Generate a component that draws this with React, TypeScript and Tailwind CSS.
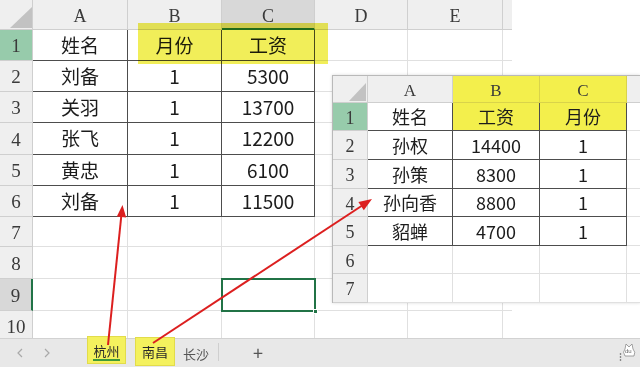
import React from "react";

const CJK = "font-['Noto_Sans_CJK_SC',sans-serif]";
const SERIF = "font-['Liberation_Serif',serif]";

const leftData: string[][] = [
  ["姓名", "月份", "工资"],
  ["刘备", "1", "5300"],
  ["关羽", "1", "13700"],
  ["张飞", "1", "12200"],
  ["黄忠", "1", "6100"],
  ["刘备", "1", "11500"],
];

const rightData: string[][] = [
  ["姓名", "工资", "月份"],
  ["孙权", "14400", "1"],
  ["孙策", "8300", "1"],
  ["孙向香", "8800", "1"],
  ["貂蝉", "4700", "1"],
];

function Corner({ tri }: { tri: string }) {
  return (
    <div className="bg-[#efefef] border-r border-b border-[#cfcfcf] relative">
      <svg className="absolute inset-0 w-full h-full">
        <polygon points={tri} fill="#c2c2c2" />
      </svg>
    </div>
  );
}

function LeftSheet() {
  const letters = ["A", "B", "C", "D", "E", ""];
  const rows = Array.from({ length: 10 }, (_, i) => i + 1);
  return (
    <div className="w-[512px] h-[338px] overflow-hidden">
      <div className="grid grid-cols-[33px_95px_94px_93px_93px_95px_9px] grid-rows-[30px_31px_31px_31px_32px_31px_31px_30px_32px_32px_31px]">
        <Corner tri="10,28 32,28 32,7" />
        {letters.map((l, i) => (
          <div
            key={l + i}
            className={`${i === 2 ? "bg-[#d8d8d8] border-b-2 border-b-[#217346]" : "bg-[#efefef] border-b border-b-[#cfcfcf]"} ${i === 5 ? "" : "border-r border-r-[#cfcfcf]"} flex items-center justify-center pt-[4px] text-[18px] text-[#3a3a3a] ${SERIF}`}
          >
            {l}
          </div>
        ))}
        {rows.map((r) => {
          const hdrBg = r === 1 ? "bg-[#97cbab]" : r === 9 ? "bg-[#d8d8d8]" : "bg-[#efefef]";
          return (
            <React.Fragment key={r}>
              <div
                className={`${hdrBg} border-b border-[#cfcfcf] ${r === 9 ? "border-r-2 border-r-[#217346]" : "border-r border-r-[#cfcfcf]"} flex items-center justify-center pt-[3px] text-[19px] text-[#3a3a3a] ${SERIF}`}
              >
                {r}
              </div>
              {[0, 1, 2, 3, 4, 5].map((c) => {
                const inTable = r <= 6 && c <= 2;
                const txt = inTable ? leftData[r - 1][c] : "";
                return (
                  <div
                    key={c}
                    className={`${inTable ? "border-[#4d4d4d]" : "border-[#e0e0e0]"} ${r <= 6 && c === 3 ? "border-b border-b-[#e0e0e0]" : "border-b"} ${c === 5 ? "" : "border-r"} flex items-center justify-center text-[19px] text-[#1c1c1c] ${CJK}`}
                  >
                    {txt}
                  </div>
                );
              })}
            </React.Fragment>
          );
        })}
      </div>
    </div>
  );
}

function RightSheet() {
  const heights = [1, 2, 3, 4, 5, 6, 7];
  return (
    <div className="absolute left-[332px] top-[75px] w-[308px] bg-white border-t border-l border-[#b9b9b9] shadow-[0_0_3px_rgba(0,0,0,0.15)]">
      <div className="grid grid-cols-[35px_85px_87px_87px_13px] grid-rows-[27px_28px_29px_29px_28px_29px_28px_29px]">
        <Corner tri="16,25 33,25 33,7" />
        <div className={`bg-[#efefef] border-r border-b border-[#cfcfcf] flex items-center justify-center pt-[4px] text-[17px] text-[#3a3a3a] ${SERIF}`}>A</div>
        <div className={`bg-[#f3ef4c] border-r border-b border-[#d9d34a] flex items-center justify-center pt-[4px] text-[17px] text-[#3a3a3a] ${SERIF}`}>B</div>
        <div className={`bg-[#f3ef4c] border-r border-b border-[#d9d34a] flex items-center justify-center pt-[4px] text-[17px] text-[#3a3a3a] ${SERIF}`}>C</div>
        <div className="bg-[#efefef] border-b border-[#cfcfcf]" />
        {heights.map((r) => (
          <React.Fragment key={r}>
            <div
              className={`${r === 1 ? "bg-[#97cbab]" : "bg-[#efefef]"} border-r border-b border-[#cfcfcf] flex items-center justify-center pt-[3px] text-[18px] text-[#3a3a3a] ${SERIF}`}
            >
              {r}
            </div>
            {[0, 1, 2].map((c) => {
              const inTable = r <= 5;
              const yellow = r === 1 && c >= 1;
              return (
                <div
                  key={c}
                  className={`${yellow ? "bg-[#f3ef4c]" : ""} ${inTable ? "border-[#4d4d4d]" : "border-[#e0e0e0]"} border-r border-b flex items-center justify-center text-[18px] text-[#1c1c1c] ${CJK}`}
                >
                  {inTable ? rightData[r - 1][c] : ""}
                </div>
              );
            })}
            <div className="border-b border-[#e0e0e0]" />
          </React.Fragment>
        ))}
      </div>
    </div>
  );
}

function TabBar() {
  return (
    <div className={`h-[29px] bg-[#e8e8e8] border-t border-[#d2d2d2] flex items-start text-[13px] ${CJK}`}>
      <svg className="ml-[17px] mt-[9px]" width="6" height="10" viewBox="0 0 6 10">
        <polyline points="5,1 1,5 5,9" fill="none" stroke="#a9a9a9" strokeWidth="1.2" />
      </svg>
      <svg className="ml-[21px] mt-[9px]" width="6" height="10" viewBox="0 0 6 10">
        <polyline points="1,1 5,5 1,9" fill="none" stroke="#a9a9a9" strokeWidth="1.2" />
      </svg>
      <div className="ml-[37px] w-[39px] h-[28px] mt-[-3px] bg-[#f4f15e] border border-[#e2dc4a] flex flex-col items-center justify-center">
        <span className="text-[#2a2a2a] leading-[16px] mt-[3px] border-b-2 border-[#3f9a3a]">杭州</span>
      </div>
      <div className="ml-[9px] w-[40px] h-[29px] mt-[-2px] bg-[#f4f15e] border border-[#e2dc4a] flex items-center justify-center text-[#2a2a2a]">
        南昌
      </div>
      <div className="ml-[8px] w-[26px] mt-[5px] text-[#555]">长沙</div>
      <div className="ml-[9px] w-px h-[18px] mt-[4px] bg-[#cfcfcf]" />
      <div className="ml-[32px] w-[14px] mt-[2px] text-center text-[#555] text-[18px] leading-[22px]">+</div>
      <div className="ml-auto mr-[1px] mt-[2px] relative w-[20px] h-[24px]">
        <svg width="20" height="24" viewBox="0 0 20 24">
          <path d="M6 8 L7 3 L10 6 L13 3 L14 8 Q17 11 15 15 L6 15 Q3 11 6 8 Z" fill="white" stroke="#8a8a8a" strokeWidth="0.8" />
          <circle cx="1.5" cy="13" r="0.8" fill="#555" />
          <circle cx="1.5" cy="16" r="0.8" fill="#555" />
          <circle cx="1.5" cy="19" r="0.8" fill="#555" />
        </svg>
        <span className="absolute left-[6px] top-[7px] text-[6px] leading-[6px] text-[#666] font-['Liberation_Sans',sans-serif]">du</span>
      </div>
    </div>
  );
}

export default function App() {
  return (
    <div className="relative w-[640px] h-[367px] overflow-hidden bg-white">
      <LeftSheet />
      <TabBar />
      {/* C9 selection */}
      <div className="absolute left-[221px] top-[278px] w-[95px] h-[34px] border-2 border-[#217346]">
        <div className="absolute right-[-4px] bottom-[-4px] w-[5px] h-[5px] bg-[#217346] border border-white" />
      </div>
      {/* yellow highlight over B1:C1 on left sheet */}
      <div className="absolute left-[138px] top-[23px] w-[190px] h-[41px] bg-[#eeea30]/80 mix-blend-multiply" />
      <RightSheet />
      {/* arrows */}
      <svg className="absolute inset-0 pointer-events-none" width="640" height="367">
        <line x1="108" y1="345" x2="121.5" y2="214" stroke="#dc1f1f" strokeWidth="2" />
        <polygon points="122.5,205 126.2,217.5 116.8,216.5" fill="#dc1f1f" />
        <line x1="153" y1="343" x2="363" y2="205" stroke="#dc1f1f" strokeWidth="2" />
        <polygon points="372,199 363.8,210.3 358.4,201.9" fill="#dc1f1f" />
      </svg>
    </div>
  );
}
